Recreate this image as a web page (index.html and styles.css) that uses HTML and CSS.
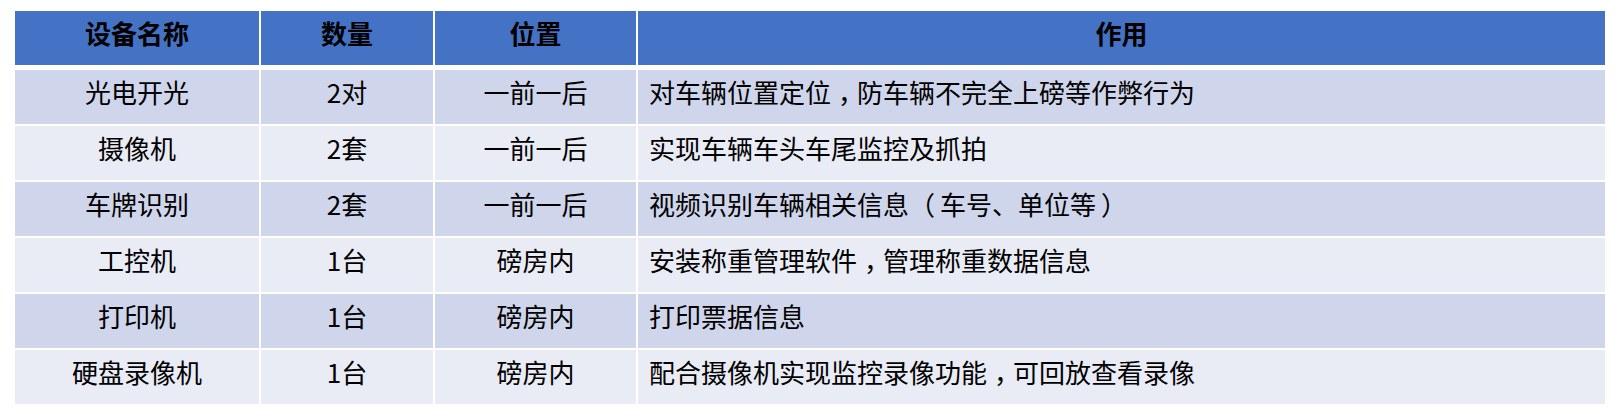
FILE: index.html
```html
<!DOCTYPE html>
<html lang="zh-CN">
<head>
<meta charset="utf-8">
<title>设备清单</title>
<link rel="stylesheet" href="styles.css">
</head>
<body>
<div class="table">
  <div class="row head">
    <div class="cell c">设备名称</div>
    <div class="cell c">数量</div>
    <div class="cell c">位置</div>
    <div class="cell c">作用</div>
  </div>
  <div class="row odd">
    <div class="cell c">光电开光</div>
    <div class="cell c">2对</div>
    <div class="cell c">一前一后</div>
    <div class="cell l">对车辆位置定位<span class="p">，</span>防车辆不完全上磅等作弊行为</div>
  </div>
  <div class="row even">
    <div class="cell c">摄像机</div>
    <div class="cell c">2套</div>
    <div class="cell c">一前一后</div>
    <div class="cell l">实现车辆车头车尾监控及抓拍</div>
  </div>
  <div class="row odd">
    <div class="cell c">车牌识别</div>
    <div class="cell c">2套</div>
    <div class="cell c">一前一后</div>
    <div class="cell l">视频识别车辆相关信息<span class="po">（</span>车号、单位等<span class="pc">）</span></div>
  </div>
  <div class="row even">
    <div class="cell c">工控机</div>
    <div class="cell c">1台</div>
    <div class="cell c">磅房内</div>
    <div class="cell l">安装称重管理软件<span class="p">，</span>管理称重数据信息</div>
  </div>
  <div class="row odd">
    <div class="cell c">打印机</div>
    <div class="cell c">1台</div>
    <div class="cell c">磅房内</div>
    <div class="cell l">打印票据信息</div>
  </div>
  <div class="row even">
    <div class="cell c">硬盘录像机</div>
    <div class="cell c">1台</div>
    <div class="cell c">磅房内</div>
    <div class="cell l">配合摄像机实现监控录像功能<span class="p">，</span>可回放查看录像</div>
  </div>
</div>
</body>
</html>
```

FILE: styles.css
```css
html, body {
  margin: 0;
  padding: 0;
  background: #ffffff;
}
body {
  font-family: "Noto Sans CJK SC", "Noto Sans", sans-serif;
  font-size: 26px;
  color: #000000;
}
.table {
  display: flex;
  flex-direction: column;
  gap: 2px;
  width: 1590px;
  margin: 11px 0 0 15px;
}
.row {
  display: grid;
  grid-template-columns: 244px 172px 201px 967px;
  column-gap: 2px;
  height: 54px;
}
.cell {
  box-sizing: border-box;
  padding-top: 7px;
  line-height: 30px;
  white-space: nowrap;
}
.c { text-align: center; }
.l { text-align: left; padding-left: 11px; }
.p { padding-left: 7px; letter-spacing: -7px; }
.po { margin-right: 5px; }
.pc { margin-left: 5px; }
.head { margin-bottom: 3px; }
.head .cell {
  background: #4472c4;
  font-weight: 700;
}
.odd .cell { background: #cfd5ea; }
.even .cell { background: #e9ebf5; }
```
